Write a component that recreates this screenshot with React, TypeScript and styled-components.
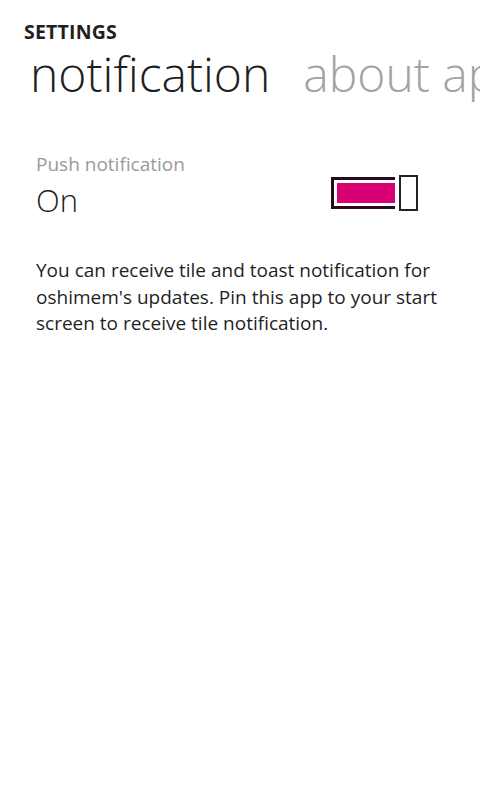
import React from "react";
import styled, { createGlobalStyle } from "styled-components";

const Global = createGlobalStyle`
  html, body { margin: 0; padding: 0; background: #ffffff; }
  body { font-family: "Open Sans", "Noto Sans", sans-serif; overflow: hidden; }
`;

const Page = styled.div`
  width: 480px;
  height: 800px;
  background: #ffffff;
  overflow: hidden;
  display: flex;
  flex-direction: column;
`;

const AppTitle = styled.div`
  margin: 20px 0 0 24px;
  font-size: 19.5px;
  font-weight: 700;
  color: #1f1f1f;
  line-height: 24px;
  letter-spacing: 0.2px;
`;

const Pivot = styled.div`
  display: flex;
  gap: 33px;
  margin: 2px 0 0 30px;
  white-space: nowrap;
  overflow: hidden;
`;

const PivotItem = styled.div<{ $active?: boolean }>`
  flex-shrink: 0;
  font-size: 48px;
  font-weight: 300;
  line-height: 56px;
  color: ${(p) => (p.$active ? "#1f1f1f" : "#a3a3a3")};
`;

const Content = styled.div`
  padding: 49px 36px 0 36px;
  display: flex;
  flex-direction: column;
`;

const ToggleRow = styled.div`
  display: flex;
  align-items: flex-start;
  justify-content: space-between;
`;

const ToggleLabels = styled.div`
  display: flex;
  flex-direction: column;
`;

const Header = styled.div`
  font-size: 19px;
  color: #9a9a9a;
  line-height: 26px;
`;

const State = styled.div`
  font-size: 31px;
  font-weight: 300;
  color: #1f1f1f;
  line-height: 44px;
  margin-top: 1px;
`;

const Switch = styled.div`
  display: flex;
  align-items: center;
  gap: 4px;
  margin: 24px 26px 0 0;
`;

const Track = styled.div`
  box-sizing: border-box;
  width: 64px;
  height: 32px;
  border: 3px solid #2a0a1a;
  border-right: none;
  padding: 3px 0 3px 3px;
  display: flex;
`;

const Fill = styled.div`
  flex: 1;
  background: #d80073;
`;

const Thumb = styled.div`
  box-sizing: border-box;
  width: 19px;
  height: 36px;
  border: 2px solid #222222;
  background: #ffffff;
`;

const Description = styled.p`
  margin: 35px 0 0 0;
  font-size: 19px;
  line-height: 26.5px;
  color: #1f1f1f;
`;

export default function App() {
  return (
    <Page>
      <Global />
      <AppTitle>SETTINGS</AppTitle>
      <Pivot>
        <PivotItem $active>notification</PivotItem>
        <PivotItem>about app</PivotItem>
      </Pivot>
      <Content>
        <ToggleRow>
          <ToggleLabels>
            <Header>Push notification</Header>
            <State>On</State>
          </ToggleLabels>
          <Switch>
            <Track>
              <Fill />
            </Track>
            <Thumb />
          </Switch>
        </ToggleRow>
        <Description>
          You can receive tile and toast notification for oshimem's updates. Pin this app to your start screen to receive tile notification.
        </Description>
      </Content>
    </Page>
  );
}
